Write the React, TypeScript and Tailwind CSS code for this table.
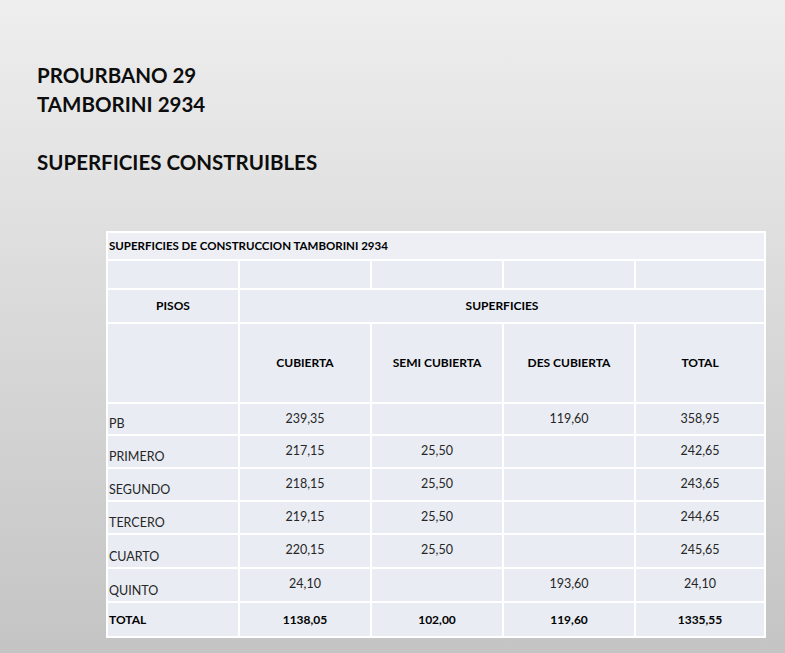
import React from 'react';

const rows = [
  { piso: "PB", cub: "239,35", semi: "", des: "119,60", total: "358,95", h: "h-[32px]" },
  { piso: "PRIMERO", cub: "217,15", semi: "25,50", des: "", total: "242,65", h: "h-[33px]" },
  { piso: "SEGUNDO", cub: "218,15", semi: "25,50", des: "", total: "243,65", h: "h-[33px]" },
  { piso: "TERCERO", cub: "219,15", semi: "25,50", des: "", total: "244,65", h: "h-[33px]" },
  { piso: "CUARTO", cub: "220,15", semi: "25,50", des: "", total: "245,65", h: "h-[34px]" },
  { piso: "QUINTO", cub: "24,10", semi: "", des: "193,60", total: "24,10", h: "h-[34px]" },
];

const cell = "border-2 border-white bg-[#e9ecf3] p-0";

const App: React.FC = () => {
  return (
    <div className="h-[653px] w-full overflow-hidden bg-gradient-to-b from-[#eeeeee] to-[#c4c4c4] font-['Lato','Liberation_Sans',sans-serif]">
      <div className="pl-[37px] pt-[61px] text-[20.5px] font-bold leading-[29px] text-[#0d0d0d]">
        <div>PROURBANO 29</div>
        <div>TAMBORINI 2934</div>
        <div className="mt-[29px]">SUPERFICIES CONSTRUIBLES</div>
      </div>

      <table className="ml-[106px] mt-[54px] w-[658px] table-fixed border-collapse text-[12.5px] text-[#262626]">
        <colgroup>
          <col className="w-[132px]" />
          <col className="w-[132px]" />
          <col className="w-[132px]" />
          <col className="w-[132px]" />
          <col className="w-[130px]" />
        </colgroup>
        <tbody>
          <tr className="h-[28px]">
            <td colSpan={5} className={`${cell} bg-[#edeff5] pl-[1px] text-[11.5px] font-bold text-black`}>
              SUPERFICIES DE CONSTRUCCION TAMBORINI 2934
            </td>
          </tr>
          <tr className="h-[29px]">
            <td className={cell}></td>
            <td className={cell}></td>
            <td className={cell}></td>
            <td className={cell}></td>
            <td className={cell}></td>
          </tr>
          <tr className="h-[34px] text-[12px]">
            <td className={`${cell} text-center font-bold text-black`}>PISOS</td>
            <td colSpan={4} className={`${cell} text-center font-bold text-black`}>SUPERFICIES</td>
          </tr>
          <tr className="h-[80px] text-[12px]">
            <td className={cell}></td>
            <td className={`${cell} text-center font-bold text-black`}>CUBIERTA</td>
            <td className={`${cell} text-center font-bold text-black`}>SEMI CUBIERTA</td>
            <td className={`${cell} text-center font-bold text-black`}>DES CUBIERTA</td>
            <td className={`${cell} text-center font-bold text-black`}>TOTAL</td>
          </tr>
          {rows.map((r) => (
            <tr key={r.piso} className={r.h}>
              <td className={`${cell} pb-[0px] pl-[1px] align-bottom`}>{r.piso}</td>
              <td className={`${cell} pt-[6px] text-center align-top`}>{r.cub}</td>
              <td className={`${cell} pt-[6px] text-center align-top`}>{r.semi}</td>
              <td className={`${cell} pt-[6px] text-center align-top`}>{r.des}</td>
              <td className={`${cell} pt-[6px] text-center align-top`}>{r.total}</td>
            </tr>
          ))}
          <tr className="h-[35px] text-[12px] font-bold text-black">
            <td className={`${cell} pl-[1px]`}>TOTAL</td>
            <td className={`${cell} text-center`}>1138,05</td>
            <td className={`${cell} text-center`}>102,00</td>
            <td className={`${cell} text-center`}>119,60</td>
            <td className={`${cell} text-center`}>1335,55</td>
          </tr>
        </tbody>
      </table>
    </div>
  );
};

export default App;
